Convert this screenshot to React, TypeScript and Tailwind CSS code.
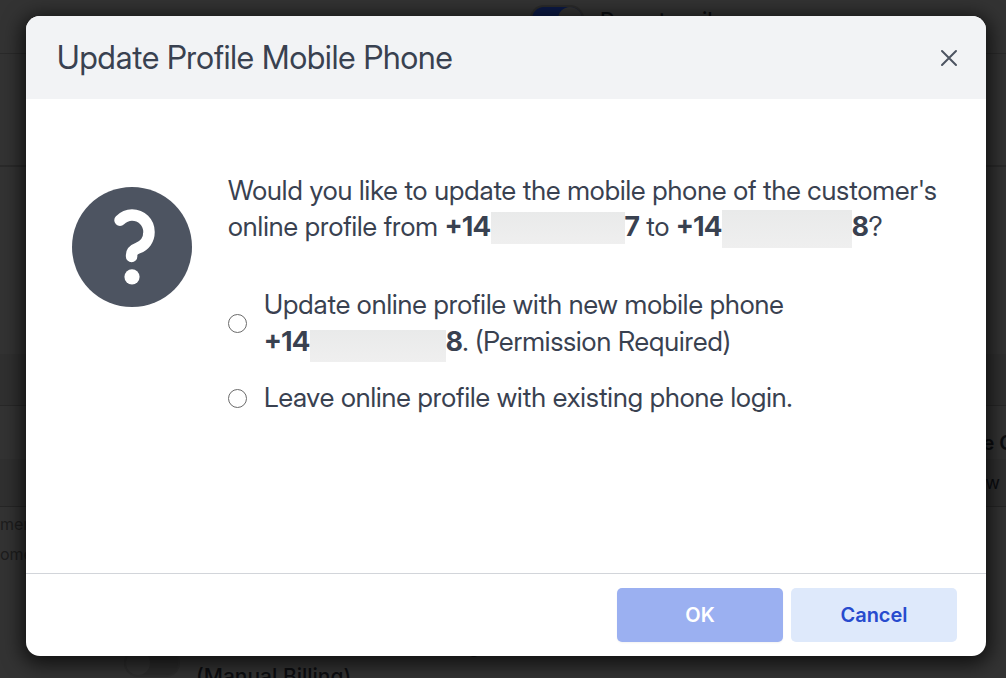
import React, { useState } from "react";

function CloseIcon() {
  return (
    <svg viewBox="0 0 18 18" className="size-[18px]" fill="none" stroke="#4d5461" strokeWidth="2" strokeLinecap="round" aria-hidden="true">
      <path d="M2 2 16 16M16 2 2 16" />
    </svg>
  );
}

function QuestionIcon() {
  return (
    <svg viewBox="0 0 120 120" className="size-[120px] shrink-0" aria-hidden="true">
      <circle cx="60" cy="60" r="60" fill="#4d5461" />
      <path
        d="M48 33.3C51.5 29.800 55.5 28 60 28C69.5 28 77 35.5 77 45C77 53 72.5 58.5 66 61C61.500 62.700 59.600 65 59.600 68V69.500"
        fill="none"
        stroke="#fff"
        strokeWidth="11.500"
        strokeLinecap="round"
        strokeLinejoin="round"
      />
      <circle cx="60" cy="89.800" r="7.600" fill="#fff" />
    </svg>
  );
}

function Redacted({ className }: { className: string }) {
  return <span className={`-my-4 inline-block bg-linear-to-b from-[#e9eaea] to-[#efefef] ${className}`} />;
}

function Backdrop() {
  return (
    <div className="flex min-h-screen flex-col overflow-hidden bg-[#333333] text-[#0c0d10]" aria-hidden="true">
      <div className="flex h-[54px] items-start gap-4 border-b border-[#2a2a2a] pt-[5px] pl-[530px]">
        <span className="flex h-7 w-[54px] justify-end rounded-full border-2 border-[#2b2b2b] bg-[#0c1a47]">
          <span className="size-6 rounded-full bg-[#333333]" />
        </span>
        <span className="pt-1 text-[21px] leading-6 font-medium">Do not mail</span>
      </div>
      <div className="h-[113px] border-b-2 border-[#2a2a2a]" />
      <div className="h-[187px]" />
      <div className="h-[52px] border-b border-[#282828] bg-[#303030]" />
      <div className="flex h-[53px] items-end justify-end pb-1">
        <span className="-mr-2 text-xl leading-6 font-semibold whitespace-nowrap">Phone C</span>
      </div>
      <div className="flex h-12 items-center justify-end border-b border-[#262626] bg-[#303030] pr-1.5 text-lg">New</div>
      <div className="flex h-[138px] flex-col pt-0.5 text-base leading-[30px] text-[#1d1d1d]">
        <span>ment</span>
        <span>omer</span>
      </div>
      <div className="flex h-[33px] gap-4 pl-[124px]">
        <span className="mt-1 h-7 w-14 shrink-0 rounded-full border-2 border-[#2e2e2e] bg-[#2c2c2c]">
          <span className="block size-6 rounded-full bg-[#333333]" />
        </span>
        <span className="-mt-4 text-[21px] leading-8 font-medium whitespace-nowrap">
          Included in Automatic Billing
          <br />
          (Manual Billing)
        </span>
      </div>
    </div>
  );
}

const radioClass =
  "size-[19px] shrink-0 appearance-none rounded-full border border-[#6b6b6b] checked:border-[6px]";

export default function App() {
  const [choice, setChoice] = useState("");
  return (
    <div className="relative h-screen min-h-[560px] overflow-hidden font-['Inter',sans-serif]">
      <Backdrop />
      <div className="absolute inset-0 flex pt-4 pr-5 pb-[22px] pl-[26px]">
        <div
          role="dialog"
          aria-modal="true"
          aria-labelledby="dialog-title"
          className="flex flex-1 flex-col overflow-hidden rounded-[14px] bg-white text-[#394150] shadow-[0_4px_20px_4px_rgba(0,0,0,0.7)]"
        >
          <header className="flex items-center justify-between bg-[#f2f3f5] py-5 pr-7 pl-[31px] font-['Inter_Display','Inter',sans-serif]">
            <h1 id="dialog-title" className="text-[32px] leading-[43px]">
              Update Profile Mobile Phone
            </h1>
            <button type="button" aria-label="Close">
              <CloseIcon />
            </button>
          </header>

          <main className="flex flex-1 gap-9 pt-[74px] pr-4 pl-[46px] font-['Inter_Display','Inter',sans-serif] text-[27px] leading-9">
            <div className="pt-[14px]">
              <QuestionIcon />
            </div>
            <div className="flex-1">
              <p>
                Would you like to update the mobile phone of the customer's
                <br />
                online profile from{" "}
                <strong>
                  +14
                  <Redacted className="h-8 w-[134px] align-[8px]" />7
                </strong>{" "}
                to{" "}
                <strong>
                  +14
                  <Redacted className="h-[38px] w-[130px] align-[4px]" />8
                </strong>
                ?
              </p>
              <fieldset className="mt-[41px] flex flex-col gap-5">
                <label className="flex items-center gap-[17px]">
                  <input
                    type="radio"
                    name="phone"
                    checked={choice === "update"}
                    onChange={() => setChoice("update")}
                    className={radioClass}
                  />
                  <span className="leading-[37px]">
                    Update online profile with new mobile phone
                    <br />
                    <strong>
                      +14
                      <Redacted className="h-8 w-[136px] align-[5px]" />8
                    </strong>
                    . (Permission Required)
                  </span>
                </label>
                <label className="flex items-center gap-[17px]">
                  <input
                    type="radio"
                    name="phone"
                    checked={choice === "leave"}
                    onChange={() => setChoice("leave")}
                    className={radioClass}
                  />
                  <span>Leave online profile with existing phone login.</span>
                </label>
              </fieldset>
            </div>
          </main>

          <footer className="flex justify-end gap-2 border-t border-[#d2d5da] py-[14px] pr-[29px] text-xl font-semibold">
            <button type="button" className="h-[54px] w-[166px] rounded-[5px] bg-[#9bb0f1] text-white shadow-xs">
              OK
            </button>
            <button type="button" className="h-[54px] w-[166px] rounded-[5px] bg-[#dee9fb] text-[#274bce]">
              Cancel
            </button>
          </footer>
        </div>
      </div>
    </div>
  );
}
